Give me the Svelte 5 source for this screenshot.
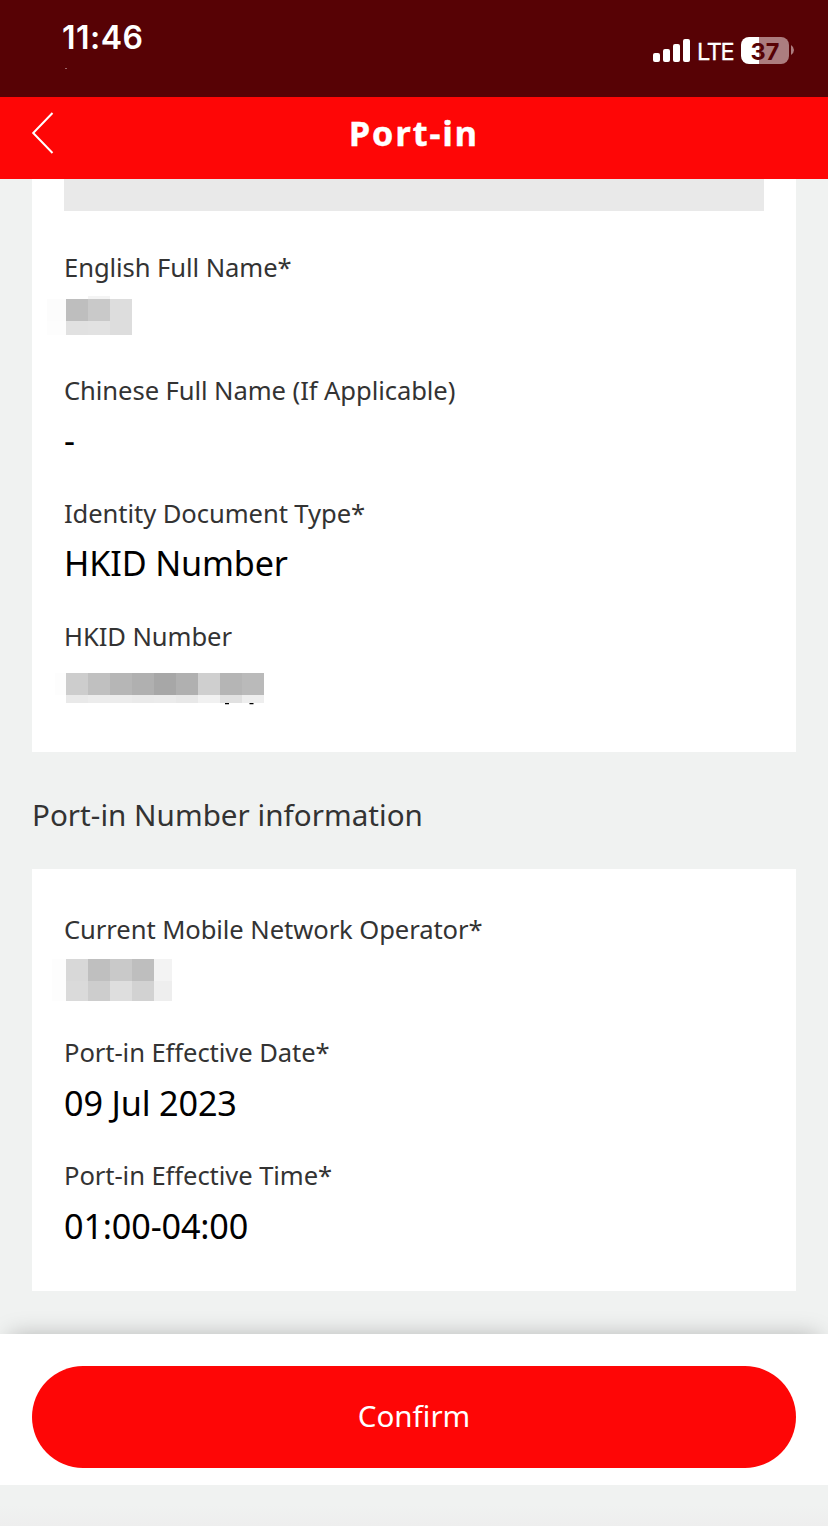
<script>
    // masked values are grids of grey blocks, one array per row
    const customer = [
        { label: 'English Full Name*', mask: {
            shift: -2, heights: [3, 22, 14],
            widths: [19, 22, 22, 22, 22],
            rows: [
                ['#fff', '#fff', '#f4f4f4', '#fff', '#fff'],
                ['#fcfcfc', '#bebebe', '#c9c9c9', '#dddddd', '#fff'],
                ['#fdfdfd', '#e1e1e1', '#e2e2e2', '#dddddd', '#fff']
            ]
        } },
        { label: 'Chinese Full Name (If Applicable)', value: '-' },
        { label: 'Identity Document Type*', value: 'HKID Number' },
        { label: 'HKID Number', marks: true, mask: {
            shift: 2, heights: [22, 8],
            widths: [11, 22, 22, 22, 22, 22, 22, 22, 22, 22],
            rows: [
                ['#fdfdfd', '#cdcdcd', '#c0c0c0', '#b6b6b6', '#b0b0b0', '#a7a7a7', '#b0b0b0', '#cfcfcf', '#b5b5b5', '#bababa'],
                ['#fff', '#e9e9e9', '#ececec', '#ececec', '#eaeaea', '#ebebeb', '#e8e8e8', '#f1f1f1', '#e1e1e1', '#eeeeee']
            ]
        } }
    ]

    const portIn = [
        { label: 'Current Mobile Network Operator*', mask: {
            shift: 0, heights: [22, 20],
            widths: [14, 22, 22, 22, 22, 18],
            rows: [
                ['#fdfdfd', '#d8d8d8', '#bfbfbf', '#c9c9c9', '#bebebe', '#f3f3f3'],
                ['#fdfdfd', '#dadada', '#cdcdcd', '#dedede', '#d2d2d2', '#eeeeee']
            ]
        } },
        { label: 'Port-in Effective Date*', value: '09 Jul 2023' },
        { label: 'Port-in Effective Time*', value: '01:00-04:00' }
    ]
</script>

{#snippet fields(list)}
    {#each list as field}
        <div class="field">
            <div class="label">{field.label}</div>
            <div class="value">
                {#if field.mask}
                    <div class="mask" style:margin-left="{2 - field.mask.widths[0]}px" style:margin-top="{field.mask.shift * 2}px">
                        {#each field.mask.rows as row, y}
                            <div class="mask-row" style:height="{field.mask.heights[y]}px">
                                {#each row as color, x}
                                    <i style:width="{field.mask.widths[x]}px" style:background={color}></i>
                                {/each}
                            </div>
                        {/each}
                        {#if field.marks}
                            <svg class="marks" width="40" height="3" viewBox="0 0 40 3"><path d="M1 .5h4M25.500 .5h4" stroke="#000" stroke-width="1.400"/></svg>
                        {/if}
                    </div>
                {:else}
                    <span class="text">{field.value}</span>
                {/if}
            </div>
        </div>
    {/each}
{/snippet}

<div class="screen">
    <div class="status">
        <div class="time">11:46<span class="speck"></span></div>
        <div class="signal">
            <svg width="38" height="24" viewBox="0 0 38 24" fill="#fff">
                <rect x="0" y="14" width="7" height="9" rx="2"/>
                <rect x="10" y="10" width="7" height="13" rx="2"/>
                <rect x="20" y="5" width="7" height="18" rx="2"/>
                <rect x="30" y="0" width="7" height="23" rx="2"/>
            </svg>
            <span class="lte">LTE</span>
            <div class="battery"><span>37</span></div>
            <svg class="tip" width="3" height="10" viewBox="0 0 3 10"><path d="M0 0q3 2 3 5t-3 5z" fill="#ac7d7f"/></svg>
        </div>
    </div>
    <header>
        <svg class="back" width="24" height="44" viewBox="0 0 24 44" fill="none" stroke="#fff" stroke-width="2"><path d="M21.500 2 2.200 22l19.300 20"/></svg>
        <h1>Port-in</h1>
    </header>
    <main>
        <section class="card first">
            <div class="box"></div>
            {@render fields(customer)}
        </section>
        <h2>Port-in Number information</h2>
        <section class="card second">
            {@render fields(portIn)}
        </section>
    </main>
    <footer>
        <button>Confirm</button>
    </footer>
    <div class="bottom"></div>
</div>

<style>
    :global(body) {
        margin: 0;
        background-color: #f0f2f1;
    }
    .screen {
        display: flex;
        flex-direction: column;
        width: 828px;
        height: 1526px;
        overflow: hidden;
        background-color: #f0f2f1;
        font-family: "Noto Sans", sans-serif;
        color: #333;
    }
    .status {
        display: flex;
        justify-content: space-between;
        box-sizing: border-box;
        height: 97px;
        padding: 17px 34px 0 62px;
        background-color: #570205;
        color: #fff;
        font-family: Inter, sans-serif;
    }
    .time {
        position: relative;
        font-size: 32px;
        font-weight: 600;
        line-height: 42px;
        letter-spacing: 0.5px;
    }
    .speck {
        position: absolute;
        left: 3px;
        top: 51px;
        width: 2px;
        height: 1px;
        background-color: #9a6668;
    }
    .signal {
        display: flex;
        align-items: center;
        height: 28px;
        padding-top: 19px;
    }
    .signal > svg:first-child {
        padding-top: 2px;
    }
    .lte {
        margin-left: 6px;
        padding-top: 3px;
        width: 44px;
        font-size: 23.5px;
        line-height: 28px;
        letter-spacing: -1.4px;
        -webkit-text-stroke: 0.3px #fff;
    }
    .battery {
        width: 48px;
        height: 27px;
        border-radius: 8px;
        background: linear-gradient(90deg, #fff 18px, #ac7d7f 18px);
        color: #570205;
        font-size: 23.5px;
        font-weight: 700;
        line-height: 29px;
        text-align: center;
    }
    .tip {
        margin-left: 2px;
    }
    header {
        position: relative;
        display: flex;
        justify-content: center;
        align-items: center;
        height: 82px;
        background-color: #fe0606;
        color: #fff;
    }
    .back {
        position: absolute;
        left: 31px;
        top: 14px;
    }
    h1 {
        margin: 0;
        padding-bottom: 10px;
        font-size: 34px;
        font-weight: 700;
        letter-spacing: 2.1px;
        -webkit-text-stroke: 0.5px #fff;
    }
    main {
        height: 1155px;
        padding: 0 32px;
    }
    .card {
        padding: 0 32px;
        background-color: #fff;
    }
    .first {
        padding-bottom: 11px;
    }
    .second {
        padding-top: 43px;
        padding-bottom: 10px;
    }
    .box {
        height: 31.5px;
        margin-bottom: 38.5px;
        background-color: #e9e9e9;
    }
    .field {
        height: 123px;
    }
    .label {
        font-size: 25.6px;
        line-height: 35px;
        height: 36px;
        letter-spacing: -0.08px;
    }
    .first .label {
        line-height: 37px;
    }
    .value {
        display: flex;
        align-items: center;
        height: 64px;
        color: #000;
        font-size: 34.2px;
        letter-spacing: -0.15px;
    }
    .text {
        padding-bottom: 2px;
    }
    .mask {
        position: relative;
    }
    .mask-row {
        display: flex;
    }
    .marks {
        position: absolute;
        right: 0;
        bottom: -3px;
    }
    h2 {
        margin: 0;
        padding-top: 4px;
        height: 113px;
        font-size: 29.6px;
        font-weight: 400;
        line-height: 117px;
        letter-spacing: 0.03px;
    }
    footer {
        box-sizing: border-box;
        height: 151px;
        padding: 31.5px 32px;
        background-color: #fff;
        box-shadow: 0 -8px 22px -10px rgba(0, 0, 0, 0.28);
    }
    button {
        display: block;
        width: 100%;
        height: 102px;
        padding: 0 0 2px;
        border: none;
        border-radius: 51px;
        background-color: #fe0606;
        color: #fff;
        font-family: inherit;
        font-size: 29.6px;
    }
    .bottom {
        position: relative;
        flex: 1;
        background: linear-gradient(#f0f2f1 20px, #eeeeee);
    }
</style>
